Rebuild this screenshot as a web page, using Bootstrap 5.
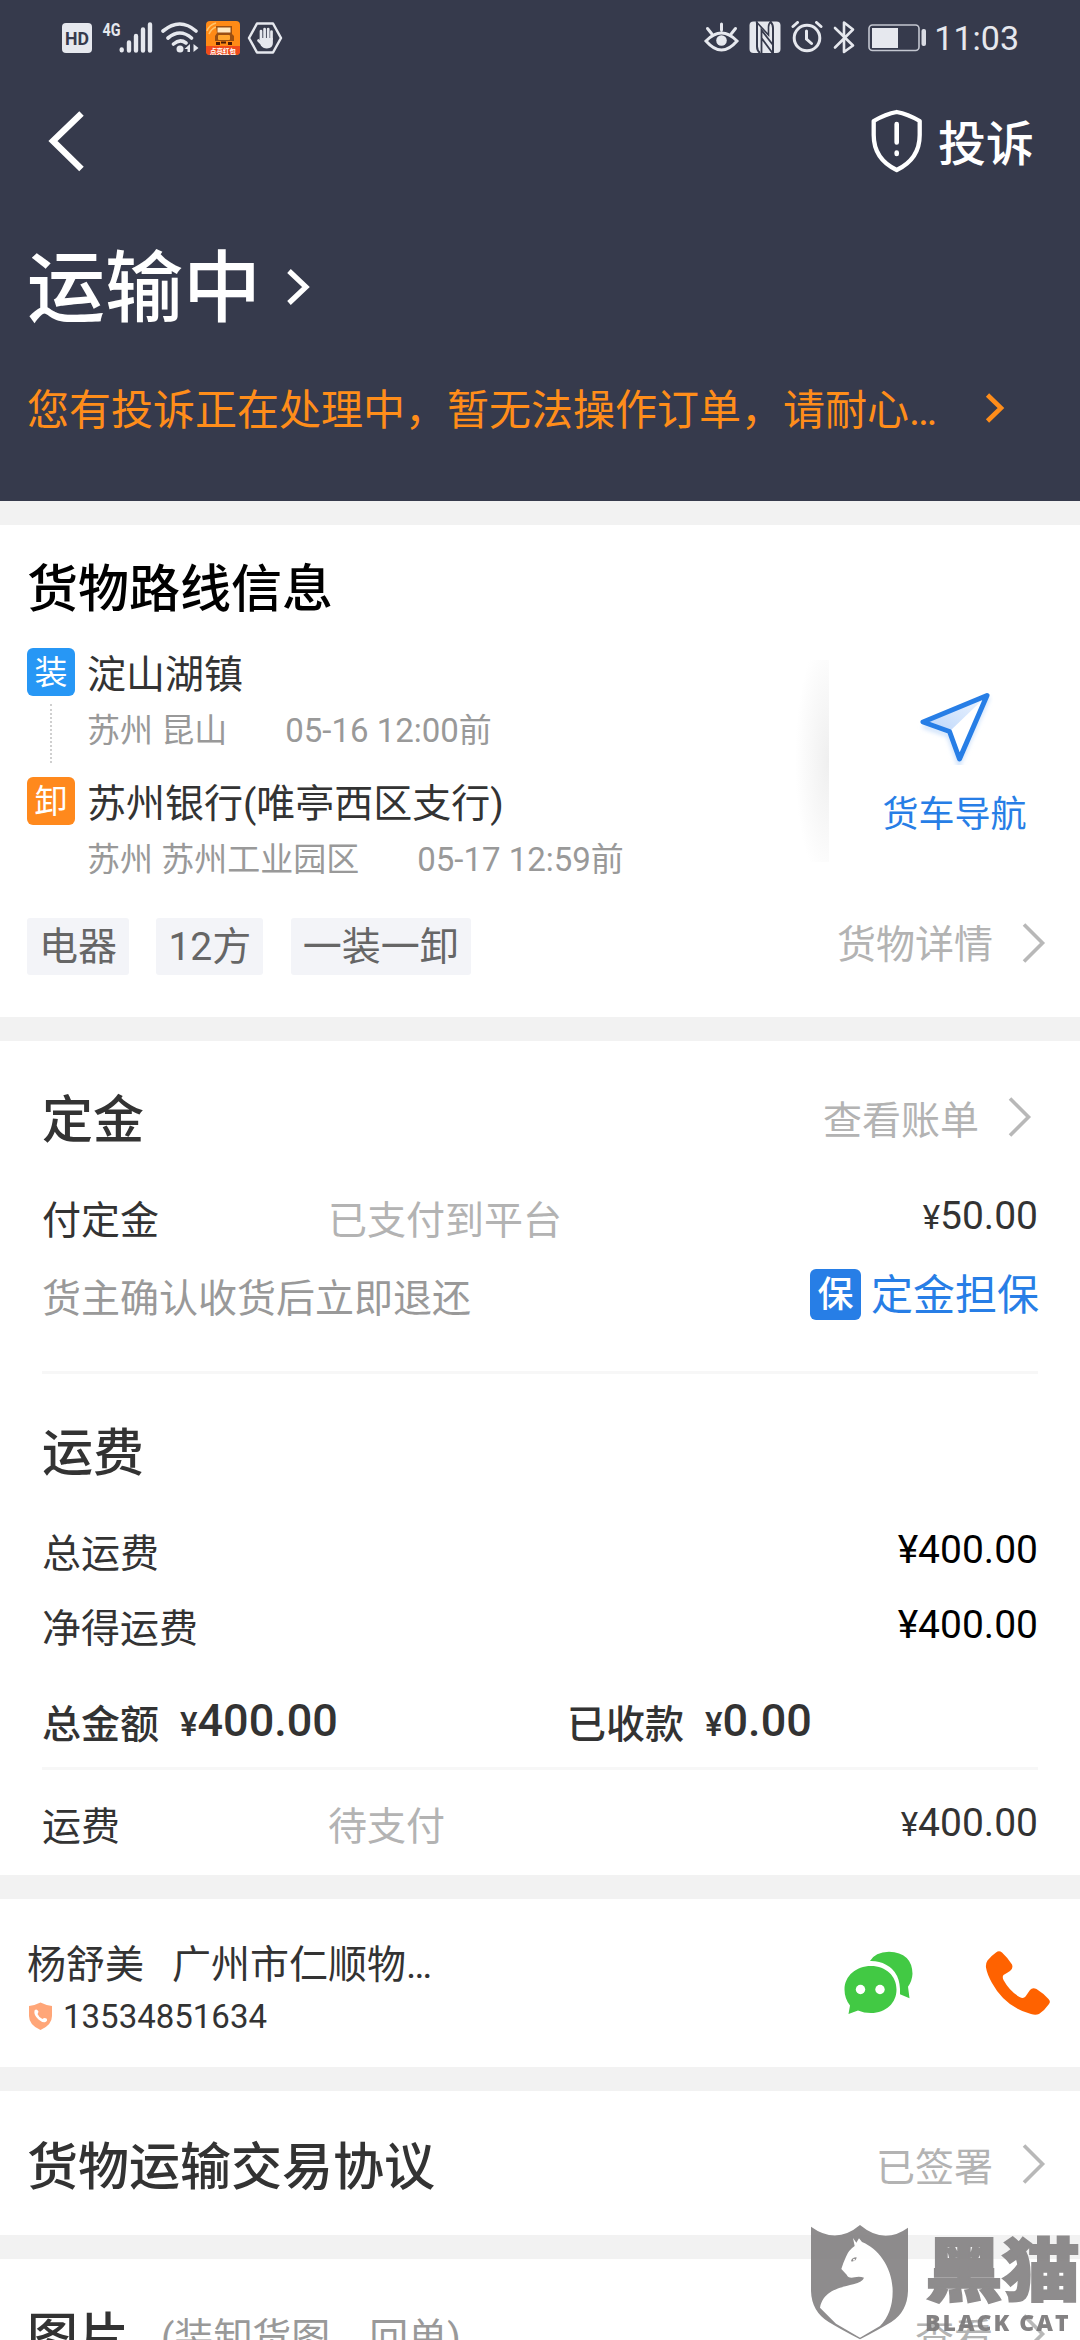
<!DOCTYPE html>
<html lang="zh-CN">
<head>
<meta charset="utf-8">
<meta name="viewport" content="width=device-width, initial-scale=1">
<title>运输中</title>
<link rel="stylesheet" href="https://cdn.jsdelivr.net/npm/bootstrap@5.3.0/dist/css/bootstrap.min.css">
<script src="https://cdn.jsdelivr.net/npm/bootstrap@5.3.0/dist/js/bootstrap.bundle.min.js"></script>
<style>
body{font-family:Roboto,"Noto Sans CJK SC",sans-serif;font-size:39px;line-height:50px;color:#333;background:#f2f2f2}
svg{display:block;flex:none}
.screen{width:1080px;height:2340px}
.hero{background:#363a4c;height:501px;margin-bottom:24px}
.status{height:34px;margin-top:21px;padding-left:62px;padding-right:61px}
.clock{font-size:34px;line-height:34px;color:#e6e8ee;margin-left:-2px}
.topbar{height:87px;margin-top:42px;padding:0 46px 0 45px}
.complain{font-size:48px;gap:15px}
.complain span,.state span{font-weight:500}
.state{font-size:78px;line-height:90px;margin-top:61px;padding-left:27px;gap:25px}
.state svg{margin-bottom:6px}
.notice{font-size:42px;color:#ff8d1a;margin-top:51px;padding-left:27px;gap:48px}
.notice span{width:910px}
.notice svg{margin-bottom:7px}
.panel{background:#fff;margin-bottom:24px}
.h-big{font-size:51px;line-height:60px;font-weight:500}
.tint-black{color:#000}
.tint-mid{color:#999}
.tint-light{color:#b3b3b3}
.tint-blue{color:#277ee6}
.route{height:492px;padding-left:27px}
.route .h-big{padding-top:35px;margin-bottom:28px}
.stops{width:768px}
.stop{height:129px}
.stop-mark{width:48px;margin-right:12px}
.sq{width:48px;height:48px;line-height:49px;font-size:33px;border-radius:6px;color:#fff;text-align:center}
.sq-load{background:#2797f5}
.sq-unload{background:#ff891d}
.dots{height:59px;margin-top:8px;border-left:2px dotted #cfcfcf}
.stop-name{line-height:54px}
.stop-sub{font-size:33px;line-height:58px;gap:58px}
.edge{width:34px;height:202px;margin-top:12px;background:radial-gradient(ellipse 34px 125px at 100% 50%,#efefef,#f7f7f7 50%,#fff 100%)}
.navi{font-size:36px;padding-top:41px;gap:25px}
.tags{height:57px;margin-top:12px;gap:27px;padding-right:32px}
.chip{background:#f3f4f8;color:#666;padding:1px 12px 0;line-height:56px;border-radius:3px}
.chip+.chip{margin-left:.4px}
.more{gap:26px}
.bill{height:834px;padding:0 42px}
.bill .head{height:155px;padding-top:4px;padding-right:4px}
.r49{height:49px}.r41{height:41px}.r108{height:108px}.r109{height:109px}.r159{height:159px}.r84{height:84px}.r105{height:105px;padding-top:9px}
.c-label{width:286px}
.amt{margin-bottom:7px}
.yen{font-size:33px}
.rule{height:3px;background:#f7f7f7}
.rule-gap{margin-top:18px}
.guard{font-size:42px;gap:10px;margin-bottom:9px;margin-right:-1px}
.guard span+span{padding-top:3px}
.guard-mark{width:51px;height:51px;line-height:52px;font-size:36px;font-weight:500;border-radius:6px;color:#fff;background:#277ee6;text-align:center}
.sum{width:525px;flex:none;font-weight:500}
.sum .total{font-size:45px;margin-left:21px;margin-bottom:5px}
.person{height:168px;padding:41px 26px 0 27px}
.person .num{font-size:33px;margin-top:2px;gap:10px}
.reach{gap:67px;margin-top:7px}
.deal{height:144px;padding:10px 32px 0 27px}
.photo{height:158px;padding:0 32px 0 27px}
.photo .hint{margin-left:32px}
.stamp{right:0;bottom:0;width:272px;height:118px;opacity:.94}
.stamp .cn{font-family:"Noto Sans CJK SC",sans-serif;font-weight:900;font-size:78px;line-height:74px;letter-spacing:-1px;color:#878586;-webkit-text-stroke:2px #878586;transform:scaleY(.89);transform-origin:0 10%}
.stamp .en{font-family:"Open Sans",sans-serif;font-weight:800;font-size:23px;line-height:24px;color:#7d7b7c;letter-spacing:2px;white-space:nowrap;margin-top:4px}
.stamp-words{margin-left:15px;padding-top:10px}
</style>
</head>
<body>
<main class="screen position-relative overflow-hidden">
  <header class="hero overflow-hidden">
    <div class="status d-flex align-items-center">
      <svg width="40" height="34" viewBox="62 21 40 34"><rect x="62" y="23" width="30" height="30" rx="4" fill="#e6e8ee"/><text x="77" y="45" text-anchor="middle" textLength="24" lengthAdjust="spacingAndGlyphs" font-family="Roboto" font-weight="700" font-size="19" fill="#363a4c">HD</text></svg>
      <svg width="56" height="34" viewBox="102 21 56 34"><text x="102.500" y="36" textLength="18" lengthAdjust="spacingAndGlyphs" font-family="Roboto" font-weight="700" font-size="19" fill="#e6e8ee">4G</text><g stroke="#e6e8ee" stroke-width="4.400" stroke-linecap="round"><path d="M121.700 49.500v.8M129 42.500v8M136 36v14.500M143 29.500v21M150 24.500v26"/></g></svg>
      <svg width="46" height="34" viewBox="158 21 46 34"><g fill="none" stroke="#e6e8ee" stroke-width="3.600" stroke-linecap="round"><path d="M163 31Q180 17 196 31M168 38Q180 28 191.500 38M173.500 44Q180 38.500 186 43"/></g><circle cx="180" cy="49" r="3.500" fill="#e6e8ee"/><path d="M190 44v8h-2.500v-3h-3zM193.500 44l5 4-5 4z" fill="#e6e8ee"/></svg>
      <svg width="42" height="34" viewBox="204 21 42 34"><rect x="206" y="21" width="34" height="34" rx="4" fill="#ff8a16"/><path d="M206 46h34v5q0 4-4 4h-26q-4 0-4-4z" fill="#f04a1b"/><path d="M207 31q2-6 9-8M209 34q2-5 7-7" stroke="#ffc36b" stroke-width="1.600" fill="none"/><path d="M216 26h16v8l2 2v5h-19v-5l2-3z" fill="#9a4f12"/><path d="M217.500 27.500h13v5h-13z" fill="#ffe9c0"/><rect x="218" y="35" width="12" height="5" rx="1" fill="#ffa62e"/><path d="M216 42h4v3h-4zM228 42h4v3h-4zM221 41.500h5v2h-5z" fill="#4a1a05"/><text x="223" y="53.500" text-anchor="middle" font-family="Noto Sans CJK SC" font-weight="700" font-size="6.500" fill="#fff">点亮红包</text></svg>
      <svg width="38" height="34" viewBox="246 21 38 34"><path d="M257 23.500h16l8 14.500-8 14.500h-16L249 38z" fill="none" stroke="#e6e8ee" stroke-width="2.500" stroke-linejoin="round"/><path d="M261 39V31M264.600 38v-9M268.200 38v-9M271.500 39v-7.500M258.500 40.500l4 4" stroke="#e6e8ee" stroke-width="2.700" stroke-linecap="round"/><path d="M259.700 38h13.200v5q0 5-6 5.500-4 0-6-3z" fill="#e6e8ee"/></svg>
      <svg class="ms-auto" width="42" height="34" viewBox="702 21 42 34"><g fill="none" stroke="#e6e8ee" stroke-width="3" stroke-linecap="round"><path d="M705 41q15.500-16 31 0-15.500 18-31 0zM720.500 24v6M706.500 28.500l4 5M734.500 28.500l-4 5"/></g><circle cx="720.500" cy="40.500" r="5.300" fill="#e6e8ee"/></svg>
      <svg width="42" height="34" viewBox="744 21 42 34"><rect x="748.500" y="21.500" width="31" height="31.500" rx="4" fill="#e6e8ee"/><path d="M756 21.500v25q0 4 3 6.500M772 53V28q0-4-3-6.500" fill="none" stroke="#363a4c" stroke-width="2"/><path d="M755 21.500l12.500 13.500v-8q0-4 3-5.500" fill="none" stroke="#363a4c" stroke-width="1.600"/><path d="M760.500 53V30l11.500 15M760.500 38l11 15" fill="none" stroke="#363a4c" stroke-width="1.800"/></svg>
      <svg width="44" height="34" viewBox="786 21 44 34"><g fill="none" stroke="#e6e8ee" stroke-width="3" stroke-linecap="round"><circle cx="806" cy="38" r="12.800"/><path d="M805.500 31v8l5 4.500M792 26.500l4.500-4M820 26.500l-4.500-4"/></g></svg>
      <svg width="34" height="34" viewBox="830 21 34 34"><path d="M834 28l18 17.500-9 6.500V22.500l9 7L834 47.500" fill="none" stroke="#e6e8ee" stroke-width="2.600" stroke-linejoin="round" stroke-linecap="round"/></svg>
      <svg width="71" height="34" viewBox="864 21 71 34"><rect x="868" y="25" width="50" height="25.500" rx="3.500" fill="none" stroke="#c3c6d0" stroke-width="1.600"/><rect x="871" y="28" width="26" height="20" fill="#e6e8ee"/><rect x="920.500" y="29" width="4.500" height="17" rx="2" fill="#d9dbe3"/></svg>
      <span class="clock">11:03</span>
    </div>
    <div class="topbar d-flex justify-content-between align-items-center">
      <svg width="44" height="64" viewBox="45 109 44 64"><path d="M81.500 113.500L53 141l28.500 28" fill="none" stroke="#fff" stroke-width="6.400"/></svg>
      <div class="complain d-flex align-items-center text-white">
        <svg width="52" height="64" viewBox="869 110 52 64"><path d="M894.700 113q11 2 23 9v14q0 24-23 35-23-11-23-35v-14q12-7 23-9z" fill="none" stroke="#fff" stroke-width="4.300" stroke-linejoin="round"/><path d="M894.700 125v18.500M894.700 153.500v1.500" stroke="#fff" stroke-width="4.600" stroke-linecap="round"/></svg>
        <span class="pt-2">投诉</span>
      </div>
    </div>
    <div class="state d-flex align-items-center text-white">
      <span>运输中</span>
      <svg width="26" height="40" viewBox="285 265 26 40"><path d="M288 269l17 16-17 16" fill="none" stroke="#fff" stroke-width="5.200"/></svg>
    </div>
    <div class="notice d-flex align-items-center">
      <span class="text-nowrap">您有投诉正在处理中，暂无法操作订单，请耐心…</span>
      <svg width="22" height="34" viewBox="985 389 22 34"><path d="M987.500 393l13.500 13-13.500 13" fill="none" stroke="#ff8d1a" stroke-width="4.600"/></svg>
    </div>
  </header>

  <section class="panel route">
    <div class="h-big tint-black">货物路线信息</div>
    <div class="d-flex">
      <div class="stops">
        <div class="stop d-flex">
          <div class="stop-mark"><div class="sq sq-load">装</div><div class="d-flex justify-content-center"><div class="dots"></div></div></div>
          <div><div class="stop-name">淀山湖镇</div><div class="stop-sub d-flex tint-mid"><span>苏州 昆山</span><span>05-16 12:00前</span></div></div>
        </div>
        <div class="stop d-flex">
          <div class="stop-mark"><div class="sq sq-unload">卸</div></div>
          <div><div class="stop-name">苏州银行(唯亭西区支行)</div><div class="stop-sub d-flex tint-mid"><span>苏州 苏州工业园区</span><span>05-17 12:59前</span></div></div>
        </div>
      </div>
      <div class="edge"></div>
      <div class="navi flex-grow-1 d-flex flex-column align-items-center tint-blue">
        <svg width="76" height="76" viewBox="915 689 76 76"><defs><linearGradient id="wing" x1="0" y1="1" x2="1" y2="0"><stop offset="0" stop-color="#bcd6fa"/><stop offset="1" stop-color="#eef5ff"/></linearGradient><filter id="glow"><feGaussianBlur stdDeviation="2"/></filter></defs><path d="M921 726l26 9 10 28 29-66" fill="none" stroke="#cfe2fb" stroke-width="5" filter="url(#glow)"/><path d="M985 695.500L921 722l26.500 9.500L957.500 759z" fill="#fff"/><path d="M985 695.500L921 722l26.500 9.500z" fill="url(#wing)"/><path d="M985 695.500L921 722l26.500 9.500L957.500 759z" fill="none" stroke="#277ee6" stroke-width="5" stroke-linejoin="round"/></svg>
        <span>货车导航</span>
      </div>
    </div>
    <div class="tags d-flex align-items-center">
      <span class="chip">电器</span><span class="chip">12方</span><span class="chip">一装一卸</span>
      <div class="more d-flex align-items-center ms-auto mb-1 tint-light"><span>货物详情</span><svg class="mb-1" width="29" height="44" viewBox="1019 920 29 44"><path d="M1024 923.500l18.500 18.500-18.500 18.500" fill="none" stroke="#b8b8b8" stroke-width="3.600"/></svg></div>
    </div>
  </section>

  <section class="panel bill">
    <div class="head d-flex justify-content-between align-items-center">
      <span class="h-big">定金</span>
      <div class="more d-flex align-items-center tint-light"><span>查看账单</span><svg class="mb-2" width="29" height="44" viewBox="1019 920 29 44"><path d="M1024 923.500l18.500 18.500-18.500 18.500" fill="none" stroke="#b8b8b8" stroke-width="3.600"/></svg></div>
    </div>
    <div class="r49 d-flex align-items-center"><span class="c-label">付定金</span><span class="tint-light">已支付到平台</span><span class="amt ms-auto"><span class="yen">¥</span>50.00</span></div>
    <div class="r108 d-flex justify-content-between align-items-center"><span class="tint-mid">货主确认收货后立即退还</span><div class="guard d-flex align-items-center tint-blue"><span class="guard-mark">保</span><span>定金担保</span></div></div>
    <div class="rule rule-gap"></div>
    <div class="r159 h-big d-flex align-items-center">运费</div>
    <div class="r41 d-flex justify-content-between align-items-center"><span>总运费</span><span class="amt tint-black">¥400.00</span></div>
    <div class="r109 d-flex justify-content-between align-items-center"><span>净得运费</span><span class="amt tint-black">¥400.00</span></div>
    <div class="r84 d-flex align-items-center">
      <div class="sum d-flex align-items-center"><span>总金额</span><span class="total"><span class="yen">¥</span>400.00</span></div>
      <div class="sum d-flex align-items-center"><span>已收款</span><span class="total"><span class="yen">¥</span>0.00</span></div>
    </div>
    <div class="rule"></div>
    <div class="r105 d-flex align-items-center"><span class="c-label">运费</span><span class="tint-light">待支付</span><span class="amt ms-auto"><span class="yen">¥</span>400.00</span></div>
  </section>

  <section class="panel person d-flex justify-content-between">
    <div>
      <div class="d-flex"><span>杨舒美</span><span class="ps-4 ms-1">广州市仁顺物…</span></div>
      <div class="num d-flex align-items-center">
        <svg width="26" height="30" viewBox="27 2003 26 30"><path d="M40.500 2003.500q6 3 11.500 3.500v10q0 9-11.500 14-11.500-5-11.500-14v-10q5.500-.5 11.500-3.500z" fill="#ffa678"/><path d="M34.500 2011.500q2-2.500 4 1-.5 2-1 2.500 1.500 3.500 5 5 1.500-1.500 4-.5 1.500 2-1 3.500-3 1-7-2.500-5-4.500-4-9z" fill="#fff"/></svg>
        <span>13534851634</span>
      </div>
    </div>
    <div class="reach d-flex">
      <svg width="74" height="72" viewBox="842 1947 74 72"><path d="M869 1961q5-9 19-9.300 23 1 23.500 22-.3 7-4.500 13l1.500 11.500-9.500-4q1-22-14-29.500-7-4-16-3.700z" fill="#42c944"/><path d="M870 1966c15 0 25.500 10 25.500 23.500S885 2013 870 2013q-7 0-13-2.500l-9.500 3.500 1.500-8.500q-5.500-7-5.500-16C843.500 1976 855 1966 870 1966z" fill="#42c944"/><circle cx="859.500" cy="1989.500" r="4.700" fill="#fff"/><circle cx="879" cy="1989.500" r="4.700" fill="#fff"/></svg>
      <svg width="70" height="72" viewBox="983 1947 70 72"><path d="M995 1952.500q3-2.500 6 0 6 5.500 10 12 1.500 4-2 6.500-3 2-6.500 4-1.500 1.500 0 5 6 11 16 17 4 2 6-.5l4.500-6.500q2.500-3 6.500-1 6.500 4 12 10 2.500 2.500.5 5-4.500 6.500-10 10-3.500 1.500-8 0-26-7-39-31-5-9-6-15.500-.5-4 1.500-7 3.500-4.500 8.500-8z" fill="#ff6200"/></svg>
    </div>
  </section>

  <section class="panel deal d-flex justify-content-between align-items-center">
    <span class="h-big">货物运输交易协议</span>
    <div class="more d-flex align-items-center tint-light"><span>已签署</span><svg class="mb-2" width="29" height="44" viewBox="1019 920 29 44"><path d="M1024 923.500l18.500 18.500-18.500 18.500" fill="none" stroke="#b8b8b8" stroke-width="3.600"/></svg></div>
  </section>

  <section class="panel photo d-flex align-items-center">
    <span class="h-big">图片</span><span class="hint tint-mid">(装卸货图、回单)</span>
    <div class="more d-flex align-items-center ms-auto tint-light"><span>查看</span><svg class="mb-2" width="29" height="44" viewBox="1019 920 29 44"><path d="M1024 923.500l18.500 18.500-18.500 18.500" fill="none" stroke="#b8b8b8" stroke-width="3.600"/></svg></div>
  </section>

  <div class="stamp position-absolute d-flex">
    <svg width="102" height="118" viewBox="84 366 306 354"><path d="M93 380q76 55 147-5 72 60 144 8v190q-2 62-50 93-40 24-94 52-54-28-94-52-51-31-53-93z" fill="#878586"/><path d="M219 414l10 14 8-13 9 11c50 20 92 78 92 148q0 66-38 104l-60 35-72-42-48-48c10-52 60-60 100-70q28-8 32-20-14-5-28-1-20 4-24-8l-16-17q6-20 14-37 8-20 26-32z" fill="#fff"/><path d="M213 484q2-12 17-12-2 14-17 12z" fill="#878586"/><circle cx="222" cy="479" r="3" fill="#fff"/></svg>
    <div class="stamp-words d-flex flex-column">
      <span class="cn">黑猫</span><span class="en">BLACK CAT</span>
    </div>
  </div>
</main>
</body>
</html>
